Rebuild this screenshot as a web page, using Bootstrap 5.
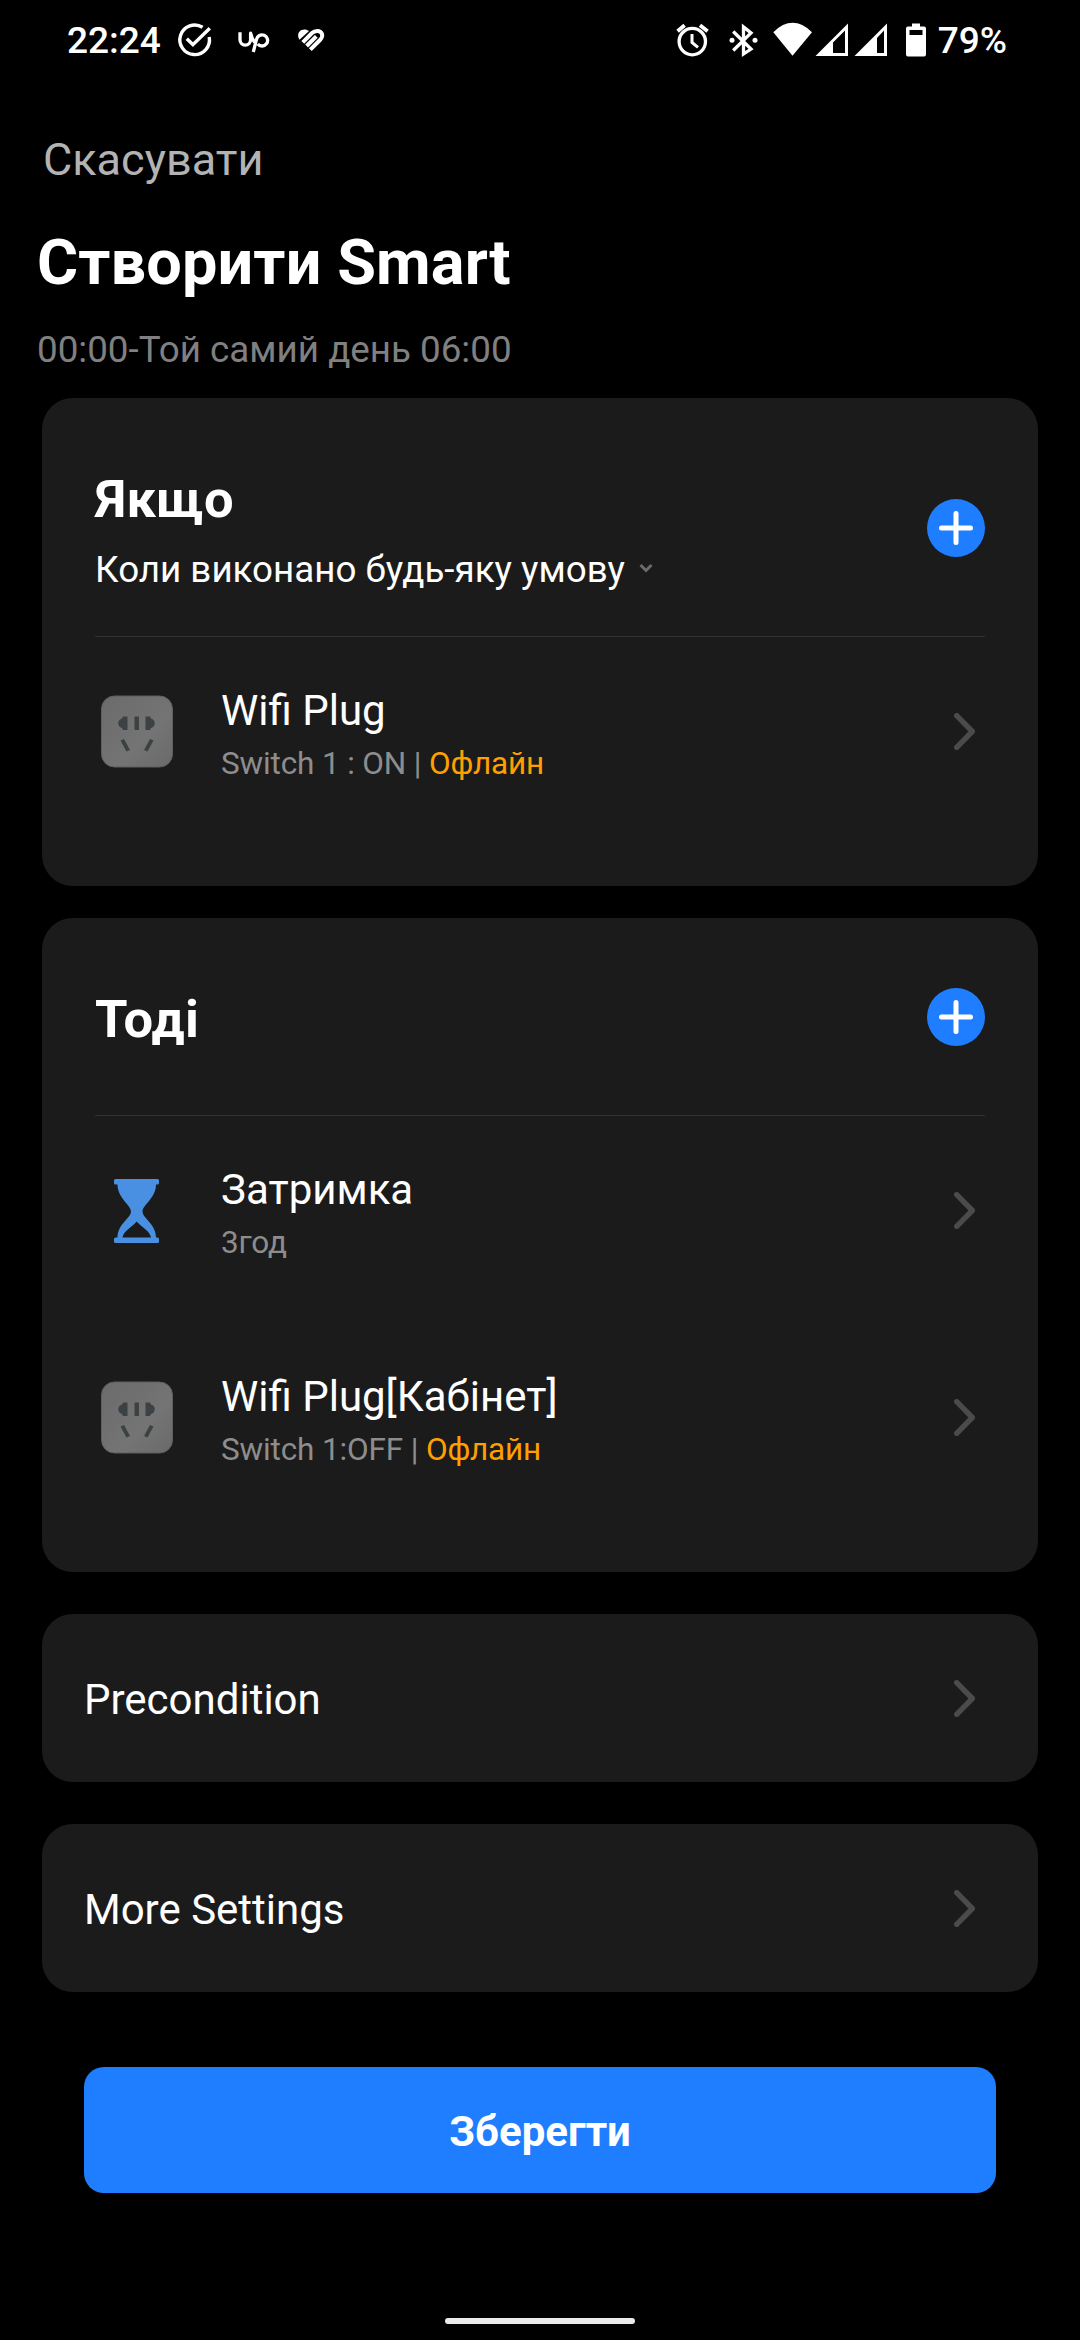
<!DOCTYPE html>
<html lang="uk">
<head>
<meta charset="utf-8">
<meta name="viewport" content="width=device-width, initial-scale=1">
<title>Створити Smart</title>
<link href="https://cdn.jsdelivr.net/npm/bootstrap@5.3.0/dist/css/bootstrap.min.css" rel="stylesheet">
<style>
  body { background: #000; color: #fff; font-family: Roboto, "Noto Sans", sans-serif; }
  svg { display: block; flex: none; }
  .screen { width: 1080px; height: 2340px; overflow: hidden; }
  .statusbar { height: 82px; padding: 0 73px 0 67px; font-size: 37px; line-height: 82px; font-weight: 500; }
  .clock { width: 109px; }
  .cancel { margin: 46px 0 0 43px; font-size: 45px; line-height: 64px; color: #b3b3b3; text-decoration: none; }
  .page-title { margin: 33px 0 0 37px; font-size: 63px; line-height: 76px; font-weight: 700; letter-spacing: .12px; }
  .period { margin: 27px 0 0 37px; font-size: 36.75px; line-height: 44px; color: #808080; }
  .panel { margin: 42px 42px 0; background: #1b1b1b; border-radius: 31px; }
  .rules { padding: 0 53px 60px; }
  .panel.if-panel { margin-top: 26px; }
  .panel.then-panel { margin-top: 32px; }
  .rules-head { padding: 68px 0 46px; border-bottom: 1px solid #323232; }
  .rules-head.single { padding-bottom: 63px; }
  .rules-head.single svg { margin-bottom: 4px; }
  .rules-head h2 { font-size: 52.5px; line-height: 66px; font-weight: 700; letter-spacing: .3px; }
  .cond { margin-top: 18px; font-size: 36.75px; line-height: 40px; gap: 14px; }
  .rule { height: 189px; padding-right: 10px; }
  .rule + .rule { margin-top: 18px; }
  .rule-text { padding: 6px 0 0 42px; }
  .rule-name { font-size: 42px; line-height: 50px; }
  .rule-state { margin-top: 9px; font-size: 31.5px; line-height: 38px; letter-spacing: -.15px; color: #8d8d8d; }
  .offline { color: #ff9f00; }
  .setting { height: 168px; padding: 0 63px 0 42px; font-size: 42px; line-height: 50px; color: #fff; text-decoration: none; }
  .setting span { padding-top: 4px; }
  .save { margin: 75px 84px 0; height: 126px; border-radius: 20px; font-size: 42px; font-weight: 700; line-height: 50px; color: #fff;
    --bs-btn-bg: #1f7eff; border: 0; padding: 4px 0 0; }
  .homebar { width: 190px; height: 6px; margin: 125px auto 0; border-radius: 3px; background: #ebebeb; }
</style>
</head>
<body>
<svg width="0" height="0" class="position-absolute">
  <defs>
    <linearGradient id="plugface" x1="0" y1="0" x2="1" y2="1">
      <stop offset="0" stop-color="#6b6b6b"/><stop offset=".6" stop-color="#747474"/><stop offset="1" stop-color="#6a6a6a"/>
    </linearGradient>
  </defs>
</svg>

<main class="screen d-flex flex-column">
  <header class="statusbar d-flex align-items-start justify-content-between">
    <div class="d-flex align-items-start">
      <span class="clock">22:24</span>
      <svg width="150" height="80" viewBox="176 0 150 80" fill="none" stroke="#fff">
        <path d="M202.600 27.300A14.800 14.800 0 1 0 209.200 37" stroke-width="3.400"/>
        <path d="M186.800 38.800 192.900 44.600 209.800 28.300" stroke-width="3.400"/>
        <path d="M240 32.200v7.600a5.300 5.300 0 0 0 10.600 0v-6.600c1.200 5.200 3 8.600 5.600 10.600M253.300 52l3.200-12.600a5.600 5.600 0 1 1 1.200 4.600" stroke-width="3.300" stroke-linejoin="round"/>
        <path d="M299.500 39.800C297 36 298 31.500 301.500 30 304.500 28.800 307 29.600 309 31z" fill="#fff" stroke="none"/>
        <path d="M302.800 42.300 312 33C315 30.200 320.500 30 322 34 323 37 321.500 38.500 320 40L310.300 49.700M306.600 46 316.300 36.300" stroke-width="4"/>
      </svg>
    </div>
    <div class="d-flex align-items-start">
      <svg width="264" height="80" viewBox="674 0 264 80" fill="none" stroke="#fff">
        <circle cx="692.300" cy="41.600" r="13.200" stroke-width="3.300"/>
        <path d="M692 34v8.500l6 4.800" stroke-width="3"/>
        <path d="M677.600 31.300 684.600 25.200M700 25.200 707.600 31.300" stroke-width="3.800"/>
        <path d="M733.200 31.500 751 49 743.500 54V27l7.500 6L733.200 50.500" stroke-width="3.300"/>
        <circle cx="732" cy="40.300" r="2.500" fill="#fff" stroke="none"/><circle cx="755" cy="40.300" r="2.500" fill="#fff" stroke="none"/>
        <path d="M773.300 32.200Q792.500 13.500 812 32.200L792.500 55.700z" fill="#fff" stroke="none"/>
        <path fill="#fff" stroke="none" fill-rule="evenodd" d="M815.500 56 848 23.500V56zM833 53h12V30.500L833 42.500z"/>
        <path fill="#fff" stroke="none" fill-rule="evenodd" d="M854.500 56 887 23.500V56zM877 53h7V30.500l-7 7.500z"/>
        <path fill="#fff" stroke="none" fill-rule="evenodd" d="M912 23.500h8v3h4a2 2 0 0 1 2 2V54.500a2 2 0 0 1-2 2H908a2 2 0 0 1-2-2V28.500a2 2 0 0 1 2-2h4zM909.500 30v5h13v-5z"/>
      </svg>
      <span>79%</span>
    </div>
  </header>

  <a class="cancel align-self-start">Скасувати</a>
  <h1 class="page-title mb-0">Створити Smart</h1>
  <p class="period mb-0">00:00-Той самий день 06:00</p>

  <section class="panel rules if-panel">
    <div class="rules-head d-flex align-items-center justify-content-between">
      <div>
        <h2 class="mb-0">Якщо</h2>
        <div class="cond d-flex align-items-center"><span>Коли виконано будь-яку умову</span>
          <svg width="14" height="14" viewBox="0 0 14 14"><path d="M1.500 2 7 7.500 12.500 2" fill="none" stroke="#6c6c6c" stroke-width="3"/></svg></div>
      </div>
      <svg width="58" height="58" viewBox="0 0 58 58"><circle cx="29" cy="29" r="29" fill="#1f7eff"/><path d="M14.500 29h29M29 14.500v29" stroke="#fff" stroke-width="5" stroke-linecap="round"/></svg>
    </div>
    <div class="rule d-flex align-items-center">
      <svg width="84" height="74" viewBox="0 0 84 74"><rect x="6.500" y="1" width="71" height="71" rx="13" fill="url(#plugface)" stroke="#5d5f61" stroke-width="1"/><g fill="#3c4144"><path d="M32.500 21.500v13.500h-4.500l-1-2c-5-1-5-8.500 0-9.500l1-2zM50.500 21.500v13.500h4.500l1-2c5-1 5-8.500 0-9.500l-1-2zM39.500 21.500h4.500V35h-4.500z"/><path d="M25.500 45.500l3.500-1.600 6 11-3.500 1.600zM58.500 45.500l-3.500-1.600-6 11 3.500 1.600z"/></g></svg>
      <div class="rule-text flex-grow-1"><div class="rule-name">Wifi Plug</div><div class="rule-state">Switch 1 : ON | <span class="offline">Офлайн</span></div></div>
      <svg width="21" height="37" viewBox="0 0 21 37"><path d="M2.700 2.700 18.300 18.500 2.700 34.300" fill="none" stroke="#4b4b4b" stroke-width="5.400" stroke-linecap="round" stroke-linejoin="round"/></svg>
    </div>
  </section>

  <section class="panel rules then-panel">
    <div class="rules-head single d-flex align-items-center justify-content-between">
      <h2 class="mb-0">Тоді</h2>
      <svg width="58" height="58" viewBox="0 0 58 58"><circle cx="29" cy="29" r="29" fill="#1f7eff"/><path d="M14.500 29h29M29 14.500v29" stroke="#fff" stroke-width="5" stroke-linecap="round"/></svg>
    </div>
    <div class="rule d-flex align-items-center">
      <svg width="84" height="66" viewBox="0 0 84 66"><path fill="#4a90e2" fill-rule="evenodd" d="M20.500 1h42q1.500 0 1.500 1.500v2.500q0 1.500-1.500 1.500h-1.500C61 20 47.500 27 47.500 33.500S61 46 61 59.500H62.500q1.500 0 1.500 1.500v2.500q0 1.500-1.500 1.500H20.500q-1.500 0-1.500-1.500V61q0-1.500 1.500-1.500h2C22.500 46 36 40 36 33.500S22.500 20 22.500 6.500H20.500q-1.500 0-1.500-1.500V2.500Q19 1 20.500 1zM41.700 43.500C37 49 28.500 53 27.500 59.500h28.500C55 53 46.500 49 41.700 43.500z"/></svg>
      <div class="rule-text flex-grow-1"><div class="rule-name">Затримка</div><div class="rule-state">3год</div></div>
      <svg width="21" height="37" viewBox="0 0 21 37"><path d="M2.700 2.700 18.300 18.500 2.700 34.300" fill="none" stroke="#4b4b4b" stroke-width="5.400" stroke-linecap="round" stroke-linejoin="round"/></svg>
    </div>
    <div class="rule d-flex align-items-center">
      <svg width="84" height="74" viewBox="0 0 84 74"><rect x="6.500" y="1" width="71" height="71" rx="13" fill="url(#plugface)" stroke="#5d5f61" stroke-width="1"/><g fill="#3c4144"><path d="M32.500 21.500v13.500h-4.500l-1-2c-5-1-5-8.500 0-9.500l1-2zM50.500 21.500v13.500h4.500l1-2c5-1 5-8.500 0-9.500l-1-2zM39.500 21.500h4.500V35h-4.500z"/><path d="M25.500 45.500l3.500-1.600 6 11-3.500 1.600zM58.500 45.500l-3.500-1.600-6 11 3.500 1.600z"/></g></svg>
      <div class="rule-text flex-grow-1"><div class="rule-name">Wifi Plug[Кабінет]</div><div class="rule-state">Switch 1:OFF | <span class="offline">Офлайн</span></div></div>
      <svg width="21" height="37" viewBox="0 0 21 37"><path d="M2.700 2.700 18.300 18.500 2.700 34.300" fill="none" stroke="#4b4b4b" stroke-width="5.400" stroke-linecap="round" stroke-linejoin="round"/></svg>
    </div>
  </section>

  <a class="panel setting d-flex align-items-center justify-content-between"><span>Precondition</span>
    <svg width="21" height="37" viewBox="0 0 21 37"><path d="M2.700 2.700 18.300 18.500 2.700 34.300" fill="none" stroke="#4b4b4b" stroke-width="5.400" stroke-linecap="round" stroke-linejoin="round"/></svg></a>
  <a class="panel setting d-flex align-items-center justify-content-between"><span>More Settings</span>
    <svg width="21" height="37" viewBox="0 0 21 37"><path d="M2.700 2.700 18.300 18.500 2.700 34.300" fill="none" stroke="#4b4b4b" stroke-width="5.400" stroke-linecap="round" stroke-linejoin="round"/></svg></a>

  <button type="button" class="btn btn-primary save">Зберегти</button>
  <div class="homebar"></div>
</main>
<script src="https://cdn.jsdelivr.net/npm/bootstrap@5.3.0/dist/js/bootstrap.bundle.min.js"></script>
</body>
</html>
